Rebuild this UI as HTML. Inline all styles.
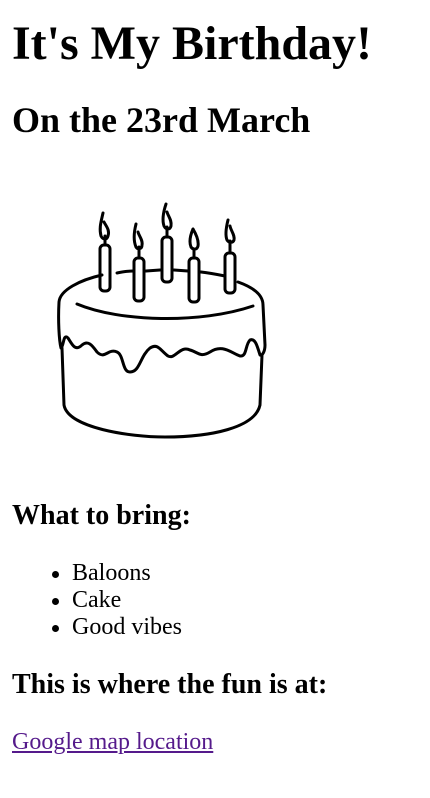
<!DOCTYPE html>
<html><head><meta charset="utf-8"><style>
body{margin:0;width:430px;height:798px;background:#fff;font-family:"Liberation Serif",serif;color:#000;position:relative;overflow:hidden}
.t{position:absolute;left:12px;margin:0;line-height:1;white-space:nowrap}
ul{margin:0;padding:0}
li{position:absolute;left:72px;font-size:24px;line-height:1;list-style:none}
li:before{content:"";position:absolute;left:-20px;top:10px;width:7px;height:7px;border-radius:50%;background:#000}
a{color:#551a8b}
</style></head><body>
<h1 class="t" style="top:20px;font-size:48px">It's My Birthday!</h1>
<h2 class="t" style="top:102px;font-size:36px">On the 23rd March</h2>
<svg style="position:absolute;left:0;top:0" width="430" height="798" fill="none" stroke="#000" stroke-width="3" stroke-linecap="round" stroke-linejoin="round">
<path d="M102 275 C80 280 60 290 59 302 C58 320 59 340 61 348 C64 346 63 333 68 338 C72 344 75 352 82 345 C88 340 92 345 97 352 C105 360 108 348 117 352 C124 355 122 372 130 372 C140 372 140 356 150 348 C158 343 160 350 168 356 C175 360 180 345 190 350 C198 352 200 358 210 352 C222 344 230 352 240 356 C247 357 245 345 250 340 C255 338 257 345 260 355 C262 356 265 352 265 345 L263 305 C263 296 255 288 238 282"/>
<path d="M117 273 C122 272 130 271 133 271 M146 271 L160 270 M174 270 L188 271 M201 272 C210 273 220 275 225 276"/>
<path d="M77 304 C120 322 200 324 253 306"/>
<path d="M62 348 L64 405 C68 428 130 437 165 437 C210 437 255 428 260 405 L262 355"/>
<g>
<rect x="100" y="245" width="10" height="46" rx="4"/>
<rect x="134" y="258" width="10" height="43" rx="4"/>
<rect x="162" y="237" width="10" height="45" rx="4"/>
<rect x="189" y="258" width="10" height="44" rx="4"/>
<rect x="225" y="253" width="10" height="40" rx="4"/>
</g>
<g>
<path d="M103 213 C101 222 99 228 101 236 C103 240 107 240 108 236 C110 230 106 226 104 222 M105 236 L105 244"/>
<path d="M136 224 C134 232 133 240 136 247 C138 250 142 249 142 245 C143 240 139 236 138 232 M139 247 L139 257"/>
<path d="M166 204 C163 213 162 220 164 226 C166 230 170 230 171 226 C172 220 168 216 167 212 M167 227 L167 236"/>
<path d="M193 229 C190 236 189 242 191 247 C193 250 197 250 198 246 C199 240 196 234 193 229 M194 249 L194 257"/>
<path d="M228 220 C226 228 225 235 227 240 C229 243 233 243 234 240 C235 235 231 231 230 226 M230 241 L230 252"/>
</g>
</svg>
<h3 class="t" style="top:502px;font-size:28px">What to bring:</h3>
<ul>
<li style="top:561px">Baloons</li>
<li style="top:588px">Cake</li>
<li style="top:615px">Good vibes</li>
</ul>
<h3 class="t" style="top:671px;font-size:28px">This is where the fun is at:</h3>
<div class="t" style="top:730px;font-size:24px"><a href="#">Google map location</a></div>
</body></html>
